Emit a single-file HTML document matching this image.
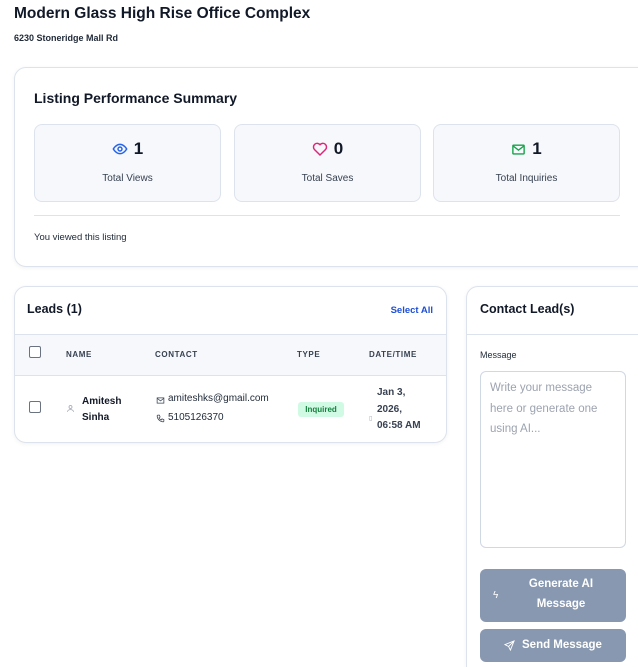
<!DOCTYPE html>
<html><head><style>
*{box-sizing:border-box;margin:0;padding:0}
html,body{width:638px;height:667px;overflow:hidden}
body{background:#fff;font-family:"Liberation Sans",sans-serif;color:#111827;position:relative}
.a{position:absolute}
.card{position:absolute;background:#fff;border:1px solid #dde3ec;border-radius:12px;box-shadow:0 1px 4px rgba(0,0,0,.06)}
.stat{position:absolute;top:56px;height:78px;width:187px;background:#f6f8fb;border:1px solid #dde3ec;border-radius:8px;text-align:center}
.stat .n{position:absolute;top:14px;left:0;right:0;font-size:17px;font-weight:bold;display:flex;justify-content:center;align-items:center;gap:6px}
.stat .l{position:absolute;top:48px;left:0;right:0;font-size:10px;color:#374151}
.cb{position:absolute;width:12px;height:12px;border:1px solid #6b7280;border-radius:2px;background:#fff}
.th{position:absolute;top:63px;font-size:8px;font-weight:bold;letter-spacing:.6px;color:#374151}
</style></head><body>
<div class="a" style="left:14px;top:5px;font-size:15.5px;font-weight:bold">Modern Glass High Rise Office Complex</div>
<div class="a" style="left:14px;top:33px;font-size:9px;font-weight:bold;color:#1f2937">6230 Stoneridge Mall Rd</div>

<div class="card" style="left:14px;top:67px;width:640px;height:200px">
 <div class="a" style="left:19px;top:22px;font-size:14px;font-weight:bold">Listing Performance Summary</div>
 <div class="stat" style="left:19px"><div class="n"><svg width="16" height="16" viewBox="0 0 24 24" fill="none" stroke="#2563eb" stroke-width="2.2"><path d="M2 12s4-7 10-7 10 7 10 7-4 7-10 7S2 12 2 12z"/><circle cx="12" cy="12" r="3"/></svg>1</div><div class="l">Total Views</div></div>
 <div class="stat" style="left:219px"><div class="n"><svg width="16" height="16" viewBox="0 0 24 24" fill="none" stroke="#db2777" stroke-width="2.2"><path d="M12 21l-8.5-8.5A5 5 0 0 1 12 5.5a5 5 0 0 1 8.5 7z"/></svg>0</div><div class="l">Total Saves</div></div>
 <div class="stat" style="left:418px"><div class="n"><svg width="15" height="15" viewBox="0 0 24 24" fill="none" stroke="#16a34a" stroke-width="2.2"><rect x="3" y="5" width="18" height="14" rx="1"/><path d="M3 6l9 7 9-7"/></svg>1</div><div class="l">Total Inquiries</div></div>
 <div class="a" style="left:19px;top:147px;width:586px;border-top:1px solid #dde3ec"></div>
 <div class="a" style="left:19px;top:164px;font-size:9.5px;color:#1f2937">You viewed this listing</div>
</div>

<div class="card" style="left:14px;top:286px;width:433px;height:157px;overflow:hidden">
 <div class="a" style="left:12px;top:15px;font-size:12.5px;font-weight:bold">Leads (1)</div>
 <div class="a" style="right:13px;top:18px;font-size:9.5px;font-weight:bold;color:#1d4ed8">Select All</div>
 <div class="a" style="left:0;top:47px;width:100%;height:42px;background:#f6f8fb;border-top:1px solid #dde3ec;border-bottom:1px solid #dde3ec"></div>
 <div class="cb" style="left:14px;top:59px"></div>
 <div class="th" style="left:51px">NAME</div>
 <div class="th" style="left:140px">CONTACT</div>
 <div class="th" style="left:282px">TYPE</div>
 <div class="th" style="left:354px">DATE/TIME</div>
 <div class="cb" style="left:14px;top:114px"></div>
 <svg class="a" style="left:51px;top:117px" width="9" height="9" viewBox="0 0 24 24" fill="none" stroke="#9ca3af" stroke-width="2"><circle cx="12" cy="8" r="4"/><path d="M4 21c0-4 4-6 8-6s8 2 8 6"/></svg>
 <div class="a" style="left:67px;top:107px;font-size:10px;font-weight:bold;line-height:16px">Amitesh<br>Sinha</div>
 <svg class="a" style="left:141px;top:109px" width="9" height="9" viewBox="0 0 24 24" fill="none" stroke="#374151" stroke-width="2"><rect x="3" y="5" width="18" height="14"/><path d="M3 6l9 7 9-7"/></svg>
 <div class="a" style="left:153px;top:106px;font-size:10px;color:#1f2937">amiteshks@gmail.com</div>
 <svg class="a" style="left:141px;top:127px" width="9" height="9" viewBox="0 0 24 24" fill="none" stroke="#374151" stroke-width="2"><path d="M5 3h4l2 5-3 2a11 11 0 0 0 6 6l2-3 5 2v4a2 2 0 0 1-2 2A17 17 0 0 1 3 5a2 2 0 0 1 2-2z"/></svg>
 <div class="a" style="left:153px;top:125px;font-size:10px;color:#1f2937">5105126370</div>
 <div class="a" style="left:283px;top:115px;width:46px;height:15px;background:#d1fae5;border-radius:3px;color:#15803d;font-size:8px;font-weight:bold;text-align:center;line-height:15px">Inquired</div>
 <div class="a" style="left:354px;top:128px;font-size:6px;color:#9ca3af">▯</div>
 <div class="a" style="left:362px;top:98px;font-size:10px;font-weight:bold;color:#374151;line-height:16.5px">Jan 3,<br>2026,<br>06:58 AM</div>
</div>

<div class="card" style="left:466px;top:286px;width:190px;height:381px;border-bottom:none;border-bottom-left-radius:0;border-bottom-right-radius:0">
 <div class="a" style="left:13px;top:15px;font-size:12.5px;font-weight:bold">Contact Lead(s)</div>
 <div class="a" style="left:0;top:47px;width:100%;border-top:1px solid #dde3ec"></div>
 <div class="a" style="left:13px;top:63px;font-size:9px;color:#1f2937">Message</div>
 <div class="a" style="left:13px;top:84px;width:146px;height:177px;border:1px solid #cfd8e3;border-radius:6px;padding:6px 9px;font-size:11.5px;line-height:20.5px;color:#9ca3af">Write your message here or generate one using AI...</div>
 <div class="a" style="left:13px;top:282px;width:146px;height:53px;background:#8898b0;border-radius:6px;color:#fff;font-size:11.5px;font-weight:bold;text-align:center;line-height:20px;padding:5px 0 0 16px">Generate AI<br>Message</div>
 <div class="a" style="left:26px;top:303px;color:#fff;font-size:10px">ϟ</div>
 <div class="a" style="left:13px;top:342px;width:146px;height:33px;background:#8898b0;border-radius:6px;color:#fff;font-size:11.5px;font-weight:bold;line-height:33px;padding-left:42px">Send Message</div>
 <svg class="a" style="left:37px;top:353px" width="11" height="11" viewBox="0 0 24 24" fill="none" stroke="#fff" stroke-width="2"><path d="M22 2L2 10l8 4 4 8z M22 2L10 14"/></svg>
</div>
</body></html>
